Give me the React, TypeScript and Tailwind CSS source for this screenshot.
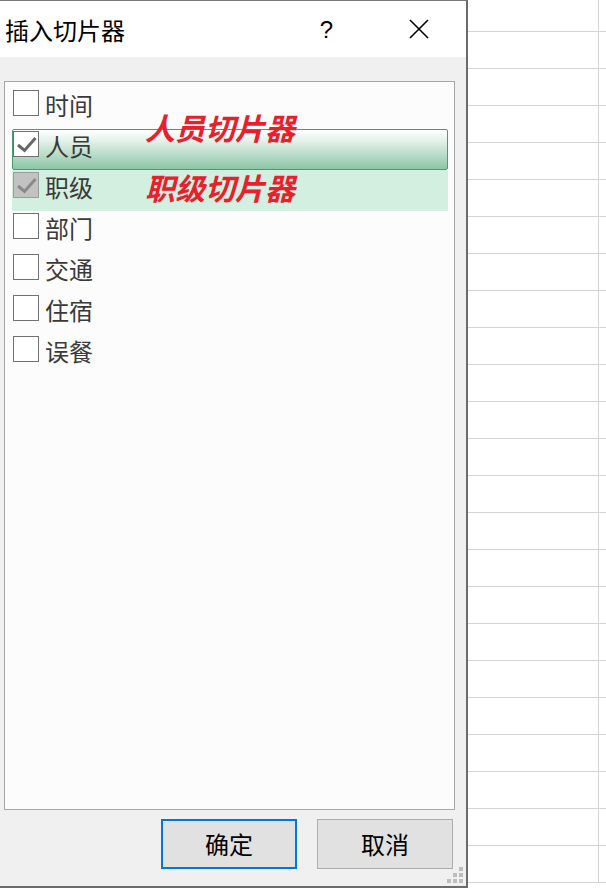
import React from "react";

type Item = { label: string; state: "none" | "selected" | "soft" };

const items: Item[] = [
  { label: "时间", state: "none" },
  { label: "人员", state: "selected" },
  { label: "职级", state: "soft" },
  { label: "部门", state: "none" },
  { label: "交通", state: "none" },
  { label: "住宿", state: "none" },
  { label: "误餐", state: "none" },
];

function Check({ color }: { color: string }) {
  return (
    <svg width="24" height="24" viewBox="0 0 24 24" className="block">
      <polyline
        points="4,13 10.5,18.5 21.5,6"
        fill="none"
        stroke={color}
        strokeWidth="3"
        strokeLinecap="butt"
        strokeLinejoin="miter"
      />
    </svg>
  );
}

function Row({ item }: { item: Item }) {
  const rowCls =
    item.state === "selected"
      ? "border-[#4a9c6d] rounded-[2px] bg-[linear-gradient(to_bottom,#ffffff_0%,#e6f3ec_25%,#8cc6a6_100%)]"
      : item.state === "soft"
      ? "border-transparent bg-[#d3efdf]"
      : "border-transparent";
  const boxCls =
    item.state === "soft"
      ? "bg-[#c2c2c2] border-[#9c9c9c]"
      : "bg-white border-[#707070]";
  return (
    <div className={`flex h-[41px] w-[436px] items-start border ${rowCls}`}>
      <div className={`mt-[1px] h-[26px] w-[26px] border ${boxCls}`}>
        {item.state === "selected" && <Check color="#666666" />}
        {item.state === "soft" && <Check color="#8a8a8a" />}
      </div>
      <span className="ml-[6px] mt-[4px] text-[24px] leading-[24px] text-[#3a3a3a]">
        {item.label}
      </span>
    </div>
  );
}

export default function App() {
  const sheetRows = Array.from({ length: 24 });
  return (
    <div className="flex h-[888px] w-[606px] overflow-hidden bg-white font-['Noto_Sans_CJK_SC','Microsoft_YaHei',sans-serif]">
      {/* Dialog */}
      <div className="relative flex h-[888px] w-[468px] shrink-0 flex-col border-t border-r-2 border-b-2 border-t-[#7a7a7a] border-r-[#6b6b6b] border-b-[#6b6b6b] bg-[#f0f0f0]">
        {/* Title bar */}
        <div className="flex h-[56px] shrink-0 items-center bg-white">
          <span className="ml-[5px] mt-[1px] text-[24px] leading-[24px] text-black">插入切片器</span>
          <span className="ml-auto mt-[1px] font-['Liberation_Sans',sans-serif] text-[24px] leading-[24px] text-black">
            ?
          </span>
          <svg width="20" height="20" viewBox="0 0 20 20" className="ml-[76px] mr-[37px]">
            <path d="M1 1 L19 19 M19 1 L1 19" stroke="#000" strokeWidth="1.6" />
          </svg>
        </div>
        {/* Body */}
        <div className="flex flex-1 flex-col pl-[4px] pt-[24px]">
          <div className="relative h-[729px] w-[451px] border border-[#a6a6a6] bg-[#fcfcfc] pl-[7px] pt-[6px]">
            {items.map((it) => (
              <Row key={it.label} item={it} />
            ))}
            <span className="absolute left-[140px] top-[30px] text-[30px] font-bold italic leading-[30px] text-[#e8202c]">
              人员切片器
            </span>
            <span className="absolute left-[140px] top-[90px] text-[30px] font-bold italic leading-[30px] text-[#e8202c]">
              职级切片器
            </span>
          </div>
          <div className="mt-[9px] flex gap-[20px] pl-[157px]">
            <button className="flex h-[50px] w-[136px] items-center justify-center border-2 border-[#0078d7] bg-[#e1e1e1] text-[24px] leading-[24px] text-black">
              确定
            </button>
            <button className="flex h-[50px] w-[136px] items-center justify-center border border-[#adadad] bg-[#e1e1e1] text-[24px] leading-[24px] text-black">
              取消
            </button>
          </div>
        </div>
        {/* Resize grip */}
        <svg width="16" height="16" viewBox="0 0 16 16" className="absolute bottom-[3px] right-[3px]">
          <rect x="12" y="0" width="4" height="4" fill="#bdbdbd" />
          <rect x="6" y="6" width="4" height="4" fill="#bdbdbd" />
          <rect x="12" y="6" width="4" height="4" fill="#bdbdbd" />
          <rect x="0" y="12" width="4" height="4" fill="#bdbdbd" />
          <rect x="6" y="12" width="4" height="4" fill="#bdbdbd" />
          <rect x="12" y="12" width="4" height="4" fill="#bdbdbd" />
        </svg>
      </div>
      {/* Spreadsheet */}
      <div className="flex flex-1 flex-col">
        {sheetRows.map((_, i) => (
          <div
            key={i}
            className={`flex shrink-0 border-b border-[#d4d4d4] ${i === 0 ? "h-[32px]" : "h-[37px]"}`}
          >
            <div className="h-full w-[131px] border-r border-[#d4d4d4]" />
          </div>
        ))}
      </div>
    </div>
  );
}
